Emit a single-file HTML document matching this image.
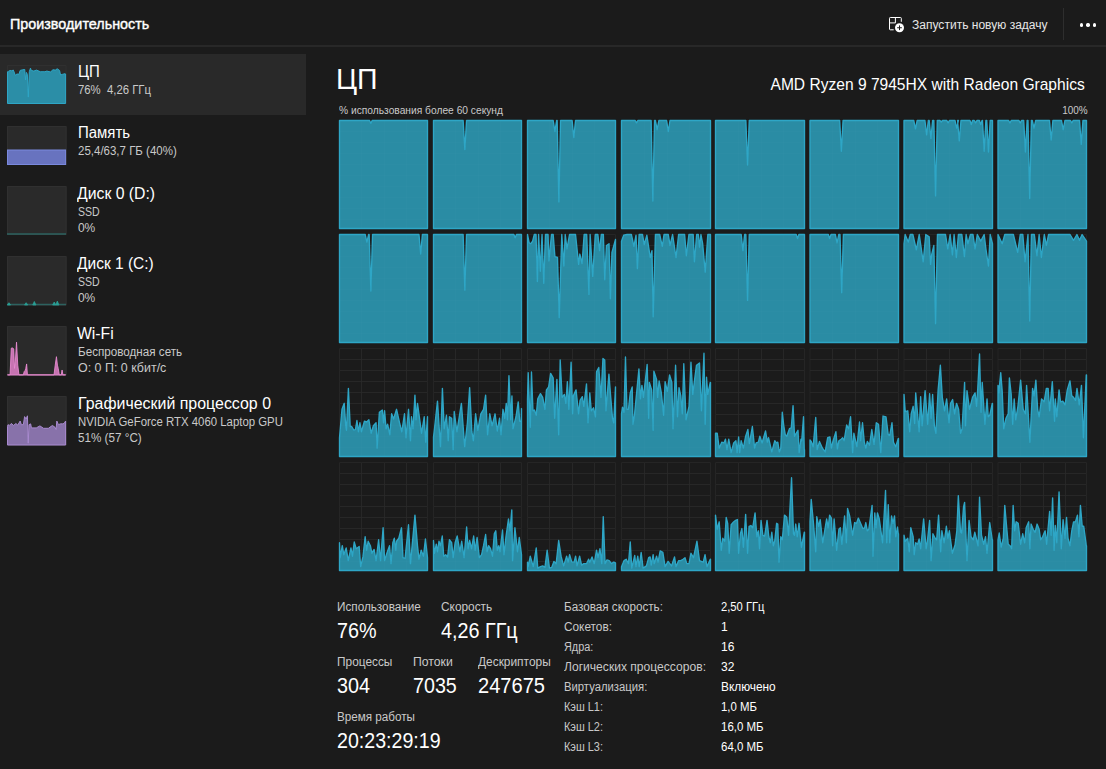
<!DOCTYPE html>
<html><head><meta charset="utf-8"><style>
html,body{margin:0;padding:0;}
body{width:1106px;height:769px;overflow:hidden;background:#1b1b1b;position:relative;font-family:"Liberation Sans", sans-serif;}
.abs{position:absolute;}
.t{position:absolute;white-space:nowrap;}
</style></head><body>
<div class="abs" style="left:0;top:45px;width:1106px;height:2px;background:#282828"></div>
<div class="abs" style="left:1063px;top:8px;width:1px;height:32px;background:#2e2e2e"></div>
<div class="abs" style="left:1080px;top:23.2px;width:3.4px;height:3.4px;border-radius:50%;background:#fff"></div>
<div class="abs" style="left:1086.2px;top:23.2px;width:3.4px;height:3.4px;border-radius:50%;background:#fff"></div>
<div class="abs" style="left:1092.6px;top:23.2px;width:3.4px;height:3.4px;border-radius:50%;background:#fff"></div>
<div class="abs" style="left:0;top:54px;width:306px;height:60.7px;background:#292929"></div>
<svg class="abs" width="24" height="24" viewBox="0 0 24 24" style="left:884px;top:12px">
<path d="M9.7 17.8H6.3a0.8 0.8 0 0 1-0.8-0.8V6.3a0.8 0.8 0 0 1 0.8-0.8H16.5a0.8 0.8 0 0 1 0.8 0.8V9.8" fill="none" stroke="#fff" stroke-width="1"/>
<path d="M5.5 10.9H11.4V5.5" fill="none" stroke="#fff" stroke-width="1"/>
<circle cx="15.5" cy="15.75" r="4.5" fill="#fff"/>
<path d="M15.5 13.4V18.1M13.15 15.75H17.85" stroke="#1c1c1c" stroke-width="1"/>
</svg>
<svg class="abs" width="80" height="460" viewBox="0 0 80 460" style="left:0;top:0"><rect x="7" y="65" width="59.6" height="39" fill="#2a2a2a"/><path d="M7.5 65.5H66.1V103.5H7.5Z" fill="none" stroke="#303030" stroke-width="1"/><path d="M7.5 103.5L7.50 71.85L7.50 71.72L8.46 71.39L10.09 70.42L11.72 70.74L13.35 70.09L15.30 75.30L16.93 74.00L18.88 74.32L20.18 70.42L22.78 69.76L24.74 69.44L25.52 79.86L26.37 72.37L27.34 74.32L28.32 97.11L29.29 71.72L30.47 68.14L31.25 70.42L33.85 71.07L36.46 70.09L40.36 71.72L44.92 71.72L46.87 71.07L50.78 72.04L52.73 69.76L55.33 70.09L57.16 68.79L59.57 70.42L60.54 74.97L62.50 74.32L65.10 73.67L65.60 74.00L65.6 103.5Z" fill="#2b8ea7" stroke="#2ea6c6" stroke-width="1"/><rect x="7" y="126" width="59.6" height="39" fill="#2a2a2a"/><path d="M7.5 126.5H66.1V164.5H7.5Z" fill="none" stroke="#303030" stroke-width="1"/><rect x="7.5" y="150" width="58.1" height="14.5" fill="#6873bf" stroke="#7a89de" stroke-width="1"/><rect x="7" y="186" width="59.6" height="49" fill="#2a2a2a"/><path d="M7.5 186.5H66.1V234.5H7.5Z" fill="none" stroke="#303030" stroke-width="1"/><path d="M7 234H66" stroke="#2d625f" stroke-width="1.4"/><rect x="7" y="256" width="59.6" height="49.5" fill="#2a2a2a"/><path d="M7.5 256.5H66.1V305.0H7.5Z" fill="none" stroke="#303030" stroke-width="1"/><path d="M7 304.5H66" stroke="#2d625f" stroke-width="1.4"/><path d="M7.37 305.0L8.97 302.7L10.57 305.0ZM24.53 305.0L26.13 302.7L27.73 305.0ZM32.72 305.0L34.32 301.5L35.92 305.0ZM52.61 305.0L54.21 302.0L55.81 305.0ZM55.73 305.0L57.33 301.1L58.93 305.0Z" stroke="#2aa095" stroke-width="0.8" fill="#2aa095"/><rect x="7" y="326" width="59.6" height="49.5" fill="#2a2a2a"/><path d="M7.5 326.5H66.1V375.0H7.5Z" fill="none" stroke="#303030" stroke-width="1"/><path d="M7.5 375.0L7.50 374.83L10.08 374.83L11.29 348.22L12.50 347.82L13.71 349.03L14.51 368.38L15.32 361.93L16.53 342.17L17.74 365.15L18.95 374.83L23.38 374.83L24.19 371.60L25.16 370.39L25.80 368.38L26.61 363.94L27.41 374.83L54.02 374.83L55.23 365.15L56.44 356.69L57.41 365.15L58.21 368.38L59.26 374.83L61.28 374.83L62.08 369.99L62.89 374.83L65.60 374.83L65.6 375.0Z" fill="#d77bc0" fill-opacity="0.9" stroke="#e88ad0" stroke-width="0.9"/><rect x="7" y="396" width="59.6" height="49.5" fill="#2a2a2a"/><path d="M7.5 396.5H66.1V445.0H7.5Z" fill="none" stroke="#303030" stroke-width="1"/><path d="M7.5 445.0L7.50 426.28L7.50 426.28L8.06 424.67L9.27 425.48L11.29 423.46L13.71 425.48L15.72 423.46L17.74 425.07L20.16 421.04L21.37 424.67L23.38 424.67L24.59 416.61L26.20 419.03L27.41 415.80L28.22 443.21L29.03 424.67L30.64 423.86L31.44 427.89L36.28 427.89L39.91 425.88L43.54 428.30L48.38 428.30L52.41 425.48L54.83 427.09L56.04 429.51L56.84 421.04L58.45 424.67L60.47 423.86L62.49 423.86L64.10 423.46L65.60 421.04L65.60 421.04L65.6 445.0Z" fill="#8872aa" stroke="#a98ad0" stroke-width="1"/></svg>
<svg class="abs" width="1106" height="769" viewBox="0 0 1106 769" style="left:0;top:0"><path d="M339.50 120.50H427.50V228.50H339.50ZM361.50 120.50V228.50M384.50 120.50V228.50M406.50 120.50V228.50M339.50 131.50H427.50M339.50 142.50H427.50M339.50 153.50H427.50M339.50 164.50H427.50M339.50 175.50H427.50M339.50 186.50H427.50M339.50 197.50H427.50M339.50 208.50H427.50M339.50 219.50H427.50" fill="none" stroke="#252525" stroke-width="1"/><path d="M339.50 228.50L339.50 120.50L369.57 120.50L370.87 123.22L372.17 120.50L427.50 120.50L427.50 228.50Z" fill="#2a8ca4" stroke="#2ea6c6" stroke-width="1.35" stroke-linejoin="round"/><path d="M361.50 120.50V228.50M384.50 120.50V228.50M406.50 120.50V228.50M339.50 131.50H427.50M339.50 142.50H427.50M339.50 153.50H427.50M339.50 164.50H427.50M339.50 175.50H427.50M339.50 186.50H427.50M339.50 197.50H427.50M339.50 208.50H427.50M339.50 219.50H427.50" fill="none" stroke="#ffffff" stroke-opacity="0.012" stroke-width="1"/><path d="M433.50 120.50H521.50V228.50H433.50ZM455.50 120.50V228.50M478.50 120.50V228.50M500.50 120.50V228.50M433.50 131.50H521.50M433.50 142.50H521.50M433.50 153.50H521.50M433.50 164.50H521.50M433.50 175.50H521.50M433.50 186.50H521.50M433.50 197.50H521.50M433.50 208.50H521.50M433.50 219.50H521.50" fill="none" stroke="#252525" stroke-width="1"/><path d="M433.50 228.50L433.50 120.50L463.14 120.50L464.84 149.50L466.54 120.50L521.50 120.50L521.50 228.50Z" fill="#2a8ca4" stroke="#2ea6c6" stroke-width="1.35" stroke-linejoin="round"/><path d="M455.50 120.50V228.50M478.50 120.50V228.50M500.50 120.50V228.50M433.50 131.50H521.50M433.50 142.50H521.50M433.50 153.50H521.50M433.50 164.50H521.50M433.50 175.50H521.50M433.50 186.50H521.50M433.50 197.50H521.50M433.50 208.50H521.50M433.50 219.50H521.50" fill="none" stroke="#ffffff" stroke-opacity="0.012" stroke-width="1"/><path d="M527.50 120.50H615.50V228.50H527.50ZM549.50 120.50V228.50M572.50 120.50V228.50M594.50 120.50V228.50M527.50 131.50H615.50M527.50 142.50H615.50M527.50 153.50H615.50M527.50 164.50H615.50M527.50 175.50H615.50M527.50 186.50H615.50M527.50 197.50H615.50M527.50 208.50H615.50M527.50 219.50H615.50" fill="none" stroke="#252525" stroke-width="1"/><path d="M527.50 228.50L527.50 120.50L553.22 120.50L554.92 131.46L556.62 120.50L557.17 120.50L558.87 201.90L560.57 120.50L572.12 120.50L573.82 137.47L575.52 120.50L615.50 120.50L615.50 228.50Z" fill="#2a8ca4" stroke="#2ea6c6" stroke-width="1.35" stroke-linejoin="round"/><path d="M549.50 120.50V228.50M572.50 120.50V228.50M594.50 120.50V228.50M527.50 131.50H615.50M527.50 142.50H615.50M527.50 153.50H615.50M527.50 164.50H615.50M527.50 175.50H615.50M527.50 186.50H615.50M527.50 197.50H615.50M527.50 208.50H615.50M527.50 219.50H615.50" fill="none" stroke="#ffffff" stroke-opacity="0.012" stroke-width="1"/><path d="M621.50 120.50H710.50V228.50H621.50ZM644.50 120.50V228.50M667.50 120.50V228.50M689.50 120.50V228.50M621.50 131.50H710.50M621.50 142.50H710.50M621.50 153.50H710.50M621.50 164.50H710.50M621.50 175.50H710.50M621.50 186.50H710.50M621.50 197.50H710.50M621.50 208.50H710.50M621.50 219.50H710.50" fill="none" stroke="#252525" stroke-width="1"/><path d="M621.50 228.50L621.50 120.50L635.22 120.50L636.52 122.87L637.82 120.50L651.14 120.50L652.84 201.04L654.54 120.50L655.44 120.50L657.14 129.74L658.84 120.50L666.60 120.50L668.30 131.46L670.00 120.50L710.50 120.50L710.50 228.50Z" fill="#2a8ca4" stroke="#2ea6c6" stroke-width="1.35" stroke-linejoin="round"/><path d="M644.50 120.50V228.50M667.50 120.50V228.50M689.50 120.50V228.50M621.50 131.50H710.50M621.50 142.50H710.50M621.50 153.50H710.50M621.50 164.50H710.50M621.50 175.50H710.50M621.50 186.50H710.50M621.50 197.50H710.50M621.50 208.50H710.50M621.50 219.50H710.50" fill="none" stroke="#ffffff" stroke-opacity="0.012" stroke-width="1"/><path d="M715.50 120.50H804.50V228.50H715.50ZM738.50 120.50V228.50M761.50 120.50V228.50M783.50 120.50V228.50M715.50 131.50H804.50M715.50 142.50H804.50M715.50 153.50H804.50M715.50 164.50H804.50M715.50 175.50H804.50M715.50 186.50H804.50M715.50 197.50H804.50M715.50 208.50H804.50M715.50 219.50H804.50" fill="none" stroke="#252525" stroke-width="1"/><path d="M715.50 228.50L715.50 120.50L745.86 120.50L747.56 164.96L749.26 120.50L804.50 120.50L804.50 228.50Z" fill="#2a8ca4" stroke="#2ea6c6" stroke-width="1.35" stroke-linejoin="round"/><path d="M738.50 120.50V228.50M761.50 120.50V228.50M783.50 120.50V228.50M715.50 131.50H804.50M715.50 142.50H804.50M715.50 153.50H804.50M715.50 164.50H804.50M715.50 175.50H804.50M715.50 186.50H804.50M715.50 197.50H804.50M715.50 208.50H804.50M715.50 219.50H804.50" fill="none" stroke="#ffffff" stroke-opacity="0.012" stroke-width="1"/><path d="M810.00 120.50H898.50V228.50H810.00ZM832.50 120.50V228.50M855.50 120.50V228.50M877.50 120.50V228.50M810.00 131.50H898.50M810.00 142.50H898.50M810.00 153.50H898.50M810.00 164.50H898.50M810.00 175.50H898.50M810.00 186.50H898.50M810.00 197.50H898.50M810.00 208.50H898.50M810.00 219.50H898.50" fill="none" stroke="#252525" stroke-width="1"/><path d="M810.00 228.50L810.00 120.50L839.66 120.50L841.36 151.22L843.06 120.50L898.50 120.50L898.50 228.50Z" fill="#2a8ca4" stroke="#2ea6c6" stroke-width="1.35" stroke-linejoin="round"/><path d="M832.50 120.50V228.50M855.50 120.50V228.50M877.50 120.50V228.50M810.00 131.50H898.50M810.00 142.50H898.50M810.00 153.50H898.50M810.00 164.50H898.50M810.00 175.50H898.50M810.00 186.50H898.50M810.00 197.50H898.50M810.00 208.50H898.50M810.00 219.50H898.50" fill="none" stroke="#ffffff" stroke-opacity="0.012" stroke-width="1"/><path d="M904.00 120.50H992.50V228.50H904.00ZM926.50 120.50V228.50M949.50 120.50V228.50M971.50 120.50V228.50M904.00 131.50H992.50M904.00 142.50H992.50M904.00 153.50H992.50M904.00 164.50H992.50M904.00 175.50H992.50M904.00 186.50H992.50M904.00 197.50H992.50M904.00 208.50H992.50M904.00 219.50H992.50" fill="none" stroke="#252525" stroke-width="1"/><path d="M904.00 228.50L904.00 120.50L913.76 120.50L915.46 128.88L917.16 120.50L924.93 120.50L926.63 134.90L928.33 120.50L929.22 120.50L930.92 138.33L932.62 120.50L933.86 120.50L935.56 195.88L937.26 120.50L939.93 120.50L941.23 122.01L942.53 120.50L946.80 120.50L948.10 122.87L949.40 120.50L954.99 120.50L956.69 128.03L958.39 120.50L957.57 120.50L959.27 140.91L960.97 120.50L969.99 120.50L971.29 124.59L972.59 120.50L974.29 120.50L975.59 122.87L976.89 120.50L979.44 120.50L980.74 124.59L982.04 120.50L982.48 120.50L984.18 151.22L985.88 120.50L986.77 120.50L988.47 152.08L990.17 120.50L992.50 120.50L992.50 228.50Z" fill="#2a8ca4" stroke="#2ea6c6" stroke-width="1.35" stroke-linejoin="round"/><path d="M926.50 120.50V228.50M949.50 120.50V228.50M971.50 120.50V228.50M904.00 131.50H992.50M904.00 142.50H992.50M904.00 153.50H992.50M904.00 164.50H992.50M904.00 175.50H992.50M904.00 186.50H992.50M904.00 197.50H992.50M904.00 208.50H992.50M904.00 219.50H992.50" fill="none" stroke="#ffffff" stroke-opacity="0.012" stroke-width="1"/><path d="M998.00 120.50H1086.50V228.50H998.00ZM1020.50 120.50V228.50M1043.50 120.50V228.50M1065.50 120.50V228.50M998.00 131.50H1086.50M998.00 142.50H1086.50M998.00 153.50H1086.50M998.00 164.50H1086.50M998.00 175.50H1086.50M998.00 186.50H1086.50M998.00 197.50H1086.50M998.00 208.50H1086.50M998.00 219.50H1086.50" fill="none" stroke="#252525" stroke-width="1"/><path d="M998.00 228.50L998.00 120.50L1008.65 120.50L1009.95 122.87L1011.25 120.50L1018.95 120.50L1020.25 122.87L1021.55 120.50L1023.71 120.50L1025.41 152.08L1027.11 120.50L1028.00 120.50L1029.70 198.46L1031.40 120.50L1032.30 120.50L1034.00 128.03L1035.70 120.50L1049.48 120.50L1051.18 140.05L1052.88 120.50L1061.50 120.50L1063.20 129.74L1064.90 120.50L1070.49 120.50L1071.79 122.87L1073.09 120.50L1079.54 120.50L1081.24 144.35L1082.94 120.50L1086.50 120.50L1086.50 228.50Z" fill="#2a8ca4" stroke="#2ea6c6" stroke-width="1.35" stroke-linejoin="round"/><path d="M1020.50 120.50V228.50M1043.50 120.50V228.50M1065.50 120.50V228.50M998.00 131.50H1086.50M998.00 142.50H1086.50M998.00 153.50H1086.50M998.00 164.50H1086.50M998.00 175.50H1086.50M998.00 186.50H1086.50M998.00 197.50H1086.50M998.00 208.50H1086.50M998.00 219.50H1086.50" fill="none" stroke="#ffffff" stroke-opacity="0.012" stroke-width="1"/><path d="M339.50 234.50H427.50V342.50H339.50ZM361.50 234.50V342.50M384.50 234.50V342.50M406.50 234.50V342.50M339.50 245.50H427.50M339.50 256.50H427.50M339.50 267.50H427.50M339.50 278.50H427.50M339.50 289.50H427.50M339.50 300.50H427.50M339.50 311.50H427.50M339.50 322.50H427.50M339.50 333.50H427.50" fill="none" stroke="#252525" stroke-width="1"/><path d="M339.50 342.50L339.50 234.50L365.22 234.50L366.92 242.03L368.62 234.50L369.17 234.50L370.87 290.99L372.57 234.50L418.99 234.50L420.69 254.05L422.39 234.50L427.50 234.50L427.50 342.50Z" fill="#2a8ca4" stroke="#2ea6c6" stroke-width="1.35" stroke-linejoin="round"/><path d="M361.50 234.50V342.50M384.50 234.50V342.50M406.50 234.50V342.50M339.50 245.50H427.50M339.50 256.50H427.50M339.50 267.50H427.50M339.50 278.50H427.50M339.50 289.50H427.50M339.50 300.50H427.50M339.50 311.50H427.50M339.50 322.50H427.50M339.50 333.50H427.50" fill="none" stroke="#ffffff" stroke-opacity="0.012" stroke-width="1"/><path d="M433.50 234.50H521.50V342.50H433.50ZM455.50 234.50V342.50M478.50 234.50V342.50M500.50 234.50V342.50M433.50 245.50H521.50M433.50 256.50H521.50M433.50 267.50H521.50M433.50 278.50H521.50M433.50 289.50H521.50M433.50 300.50H521.50M433.50 311.50H521.50M433.50 322.50H521.50M433.50 333.50H521.50" fill="none" stroke="#252525" stroke-width="1"/><path d="M433.50 342.50L433.50 234.50L463.14 234.50L464.84 290.13L466.54 234.50L513.88 234.50L515.18 237.73L516.48 234.50L521.50 234.50L521.50 342.50Z" fill="#2a8ca4" stroke="#2ea6c6" stroke-width="1.35" stroke-linejoin="round"/><path d="M455.50 234.50V342.50M478.50 234.50V342.50M500.50 234.50V342.50M433.50 245.50H521.50M433.50 256.50H521.50M433.50 267.50H521.50M433.50 278.50H521.50M433.50 289.50H521.50M433.50 300.50H521.50M433.50 311.50H521.50M433.50 322.50H521.50M433.50 333.50H521.50" fill="none" stroke="#ffffff" stroke-opacity="0.012" stroke-width="1"/><path d="M527.50 234.50H615.50V342.50H527.50ZM549.50 234.50V342.50M572.50 234.50V342.50M594.50 234.50V342.50M527.50 245.50H615.50M527.50 256.50H615.50M527.50 267.50H615.50M527.50 278.50H615.50M527.50 289.50H615.50M527.50 300.50H615.50M527.50 311.50H615.50M527.50 322.50H615.50M527.50 333.50H615.50" fill="none" stroke="#252525" stroke-width="1"/><path d="M527.50 342.50L527.50 234.50L529.15 242.88L530.87 243.74L532.59 241.17L534.31 234.50L536.03 234.50L537.40 281.54L538.60 234.50L540.32 271.23L542.04 234.50L543.76 283.25L545.47 234.50L548.05 234.50L548.91 260.92L551.49 234.50L553.20 234.50L554.92 256.63L557.50 257.49L559.22 317.61L561.79 234.50L563.86 266.08L565.23 234.50L566.95 248.90L569.52 234.50L575.54 234.50L578.63 264.36L579.83 254.05L582.07 263.50L584.13 234.50L586.70 234.50L588.94 294.42L590.14 234.50L592.72 276.38L595.29 234.50L597.87 234.50L599.59 250.61L601.31 234.50L603.37 234.50L604.74 279.82L606.46 245.46L609.04 243.74L610.41 298.72L611.96 252.33L615.50 239.45L615.50 342.50Z" fill="#2a8ca4" stroke="#2ea6c6" stroke-width="1.35" stroke-linejoin="round"/><path d="M549.50 234.50V342.50M572.50 234.50V342.50M594.50 234.50V342.50M527.50 245.50H615.50M527.50 256.50H615.50M527.50 267.50H615.50M527.50 278.50H615.50M527.50 289.50H615.50M527.50 300.50H615.50M527.50 311.50H615.50M527.50 322.50H615.50M527.50 333.50H615.50" fill="none" stroke="#ffffff" stroke-opacity="0.012" stroke-width="1"/><path d="M621.50 234.50H710.50V342.50H621.50ZM644.50 234.50V342.50M667.50 234.50V342.50M689.50 234.50V342.50M621.50 245.50H710.50M621.50 256.50H710.50M621.50 267.50H710.50M621.50 278.50H710.50M621.50 289.50H710.50M621.50 300.50H710.50M621.50 311.50H710.50M621.50 322.50H710.50M621.50 333.50H710.50" fill="none" stroke="#252525" stroke-width="1"/><path d="M621.50 342.50L621.50 241.17L623.64 235.15L627.07 234.50L631.37 234.50L633.95 246.32L636.01 235.15L637.38 268.65L639.10 234.50L642.54 234.50L644.25 244.60L646.83 235.15L650.27 257.49L651.98 250.61L653.19 316.75L655.42 234.50L659.71 234.50L662.29 246.32L664.01 234.50L668.30 234.50L670.02 245.46L672.60 234.50L676.03 257.49L678.61 234.50L684.62 234.50L686.34 255.77L688.92 234.50L693.21 234.50L694.42 261.78L696.65 234.50L698.37 234.50L699.57 247.18L700.94 234.50L702.66 243.74L705.24 272.09L707.82 234.50L710.39 234.50L710.50 234.50L710.50 342.50Z" fill="#2a8ca4" stroke="#2ea6c6" stroke-width="1.35" stroke-linejoin="round"/><path d="M644.50 234.50V342.50M667.50 234.50V342.50M689.50 234.50V342.50M621.50 245.50H710.50M621.50 256.50H710.50M621.50 267.50H710.50M621.50 278.50H710.50M621.50 289.50H710.50M621.50 300.50H710.50M621.50 311.50H710.50M621.50 322.50H710.50M621.50 333.50H710.50" fill="none" stroke="#ffffff" stroke-opacity="0.012" stroke-width="1"/><path d="M715.50 234.50H804.50V342.50H715.50ZM738.50 234.50V342.50M761.50 234.50V342.50M783.50 234.50V342.50M715.50 245.50H804.50M715.50 256.50H804.50M715.50 267.50H804.50M715.50 278.50H804.50M715.50 289.50H804.50M715.50 300.50H804.50M715.50 311.50H804.50M715.50 322.50H804.50M715.50 333.50H804.50" fill="none" stroke="#252525" stroke-width="1"/><path d="M715.50 342.50L715.50 234.50L741.22 234.50L742.92 250.61L744.62 234.50L745.86 234.50L747.56 300.43L749.26 234.50L796.25 234.50L797.55 238.59L798.85 234.50L804.50 234.50L804.50 342.50Z" fill="#2a8ca4" stroke="#2ea6c6" stroke-width="1.35" stroke-linejoin="round"/><path d="M738.50 234.50V342.50M761.50 234.50V342.50M783.50 234.50V342.50M715.50 245.50H804.50M715.50 256.50H804.50M715.50 267.50H804.50M715.50 278.50H804.50M715.50 289.50H804.50M715.50 300.50H804.50M715.50 311.50H804.50M715.50 322.50H804.50M715.50 333.50H804.50" fill="none" stroke="#ffffff" stroke-opacity="0.012" stroke-width="1"/><path d="M810.00 234.50H898.50V342.50H810.00ZM832.50 234.50V342.50M855.50 234.50V342.50M877.50 234.50V342.50M810.00 245.50H898.50M810.00 256.50H898.50M810.00 267.50H898.50M810.00 278.50H898.50M810.00 289.50H898.50M810.00 300.50H898.50M810.00 311.50H898.50M810.00 322.50H898.50M810.00 333.50H898.50" fill="none" stroke="#252525" stroke-width="1"/><path d="M810.00 342.50L810.00 234.50L828.38 234.50L829.68 238.59L830.98 234.50L835.36 234.50L837.06 242.88L838.76 234.50L840.00 234.50L841.70 292.70L843.40 234.50L898.50 234.50L898.50 342.50Z" fill="#2a8ca4" stroke="#2ea6c6" stroke-width="1.35" stroke-linejoin="round"/><path d="M832.50 234.50V342.50M855.50 234.50V342.50M877.50 234.50V342.50M810.00 245.50H898.50M810.00 256.50H898.50M810.00 267.50H898.50M810.00 278.50H898.50M810.00 289.50H898.50M810.00 300.50H898.50M810.00 311.50H898.50M810.00 322.50H898.50M810.00 333.50H898.50" fill="none" stroke="#ffffff" stroke-opacity="0.012" stroke-width="1"/><path d="M904.00 234.50H992.50V342.50H904.00ZM926.50 234.50V342.50M949.50 234.50V342.50M971.50 234.50V342.50M904.00 245.50H992.50M904.00 256.50H992.50M904.00 267.50H992.50M904.00 278.50H992.50M904.00 289.50H992.50M904.00 300.50H992.50M904.00 311.50H992.50M904.00 322.50H992.50M904.00 333.50H992.50" fill="none" stroke="#252525" stroke-width="1"/><path d="M904.00 342.50L904.00 243.74L905.15 234.50L908.25 242.03L910.31 234.50L912.88 234.50L916.32 249.76L919.24 234.50L923.19 261.78L925.77 234.50L929.20 236.87L930.58 264.36L931.78 254.05L933.84 245.46L935.56 323.63L937.45 234.50L945.52 234.50L947.76 248.90L950.16 234.50L952.40 254.91L954.11 234.50L956.35 257.49L958.41 234.50L961.84 234.50L964.42 256.63L966.14 234.50L967.86 243.74L970.43 234.50L973.01 234.50L975.07 248.90L977.31 234.50L980.74 241.17L984.18 234.50L985.90 248.90L988.47 266.08L990.19 234.50L992.50 243.74L992.50 342.50Z" fill="#2a8ca4" stroke="#2ea6c6" stroke-width="1.35" stroke-linejoin="round"/><path d="M926.50 234.50V342.50M949.50 234.50V342.50M971.50 234.50V342.50M904.00 245.50H992.50M904.00 256.50H992.50M904.00 267.50H992.50M904.00 278.50H992.50M904.00 289.50H992.50M904.00 300.50H992.50M904.00 311.50H992.50M904.00 322.50H992.50M904.00 333.50H992.50" fill="none" stroke="#ffffff" stroke-opacity="0.012" stroke-width="1"/><path d="M998.00 234.50H1086.50V342.50H998.00ZM1020.50 234.50V342.50M1043.50 234.50V342.50M1065.50 234.50V342.50M998.00 245.50H1086.50M998.00 256.50H1086.50M998.00 267.50H1086.50M998.00 278.50H1086.50M998.00 289.50H1086.50M998.00 300.50H1086.50M998.00 311.50H1086.50M998.00 322.50H1086.50M998.00 333.50H1086.50" fill="none" stroke="#252525" stroke-width="1"/><path d="M998.00 342.50L998.00 234.50L1002.22 243.74L1004.79 234.50L1013.38 234.50L1017.68 252.33L1020.25 234.50L1022.83 234.50L1025.06 261.78L1027.98 234.50L1029.70 321.05L1031.42 234.50L1034.34 234.50L1036.92 255.77L1039.15 234.50L1041.38 257.49L1044.30 234.50L1046.37 245.46L1048.60 234.50L1070.07 234.50L1073.51 240.31L1076.94 234.50L1079.52 240.31L1082.10 234.50L1086.50 241.17L1086.50 342.50Z" fill="#2a8ca4" stroke="#2ea6c6" stroke-width="1.35" stroke-linejoin="round"/><path d="M1020.50 234.50V342.50M1043.50 234.50V342.50M1065.50 234.50V342.50M998.00 245.50H1086.50M998.00 256.50H1086.50M998.00 267.50H1086.50M998.00 278.50H1086.50M998.00 289.50H1086.50M998.00 300.50H1086.50M998.00 311.50H1086.50M998.00 322.50H1086.50M998.00 333.50H1086.50" fill="none" stroke="#ffffff" stroke-opacity="0.012" stroke-width="1"/><path d="M339.50 348.50H427.50V456.50H339.50ZM361.50 348.50V456.50M384.50 348.50V456.50M406.50 348.50V456.50M339.50 359.50H427.50M339.50 370.50H427.50M339.50 381.50H427.50M339.50 392.50H427.50M339.50 403.50H427.50M339.50 414.50H427.50M339.50 425.50H427.50M339.50 436.50H427.50M339.50 447.50H427.50" fill="none" stroke="#252525" stroke-width="1"/><path d="M339.50 456.50L339.50 437.71L341.98 409.30L344.22 403.32L345.72 425.75L346.47 430.23L348.41 388.36L350.21 426.50L351.70 426.50L353.94 430.23L355.44 429.49L356.93 420.51L358.43 431.73L359.93 422.76L361.42 431.73L364.41 421.26L366.65 422.01L368.90 419.77L371.14 433.22L373.38 425.75L376.07 422.76L377.12 448.18L379.36 412.29L382.36 410.05L383.55 422.76L384.60 410.79L386.09 428.74L387.59 424.25L389.83 434.72L391.63 413.79L393.57 419.02L396.56 409.30L399.55 422.76L401.79 431.73L404.49 413.79L405.98 437.71L408.52 409.30L410.47 440.70L411.51 416.78L413.01 428.74L414.95 395.09L416.00 419.77L417.50 403.32L419.74 419.77L421.53 433.22L424.22 416.78L425.72 442.20L427.50 416.78L427.50 456.50Z" fill="#2a8ca4" stroke="#2ea6c6" stroke-width="1.35" stroke-linejoin="round"/><path d="M361.50 348.50V456.50M384.50 348.50V456.50M406.50 348.50V456.50M339.50 359.50H427.50M339.50 370.50H427.50M339.50 381.50H427.50M339.50 392.50H427.50M339.50 403.50H427.50M339.50 414.50H427.50M339.50 425.50H427.50M339.50 436.50H427.50M339.50 447.50H427.50" fill="none" stroke="#ffffff" stroke-opacity="0.012" stroke-width="1"/><path d="M433.50 348.50H521.50V456.50H433.50ZM455.50 348.50V456.50M478.50 348.50V456.50M500.50 348.50V456.50M433.50 359.50H521.50M433.50 370.50H521.50M433.50 381.50H521.50M433.50 392.50H521.50M433.50 403.50H521.50M433.50 414.50H521.50M433.50 425.50H521.50M433.50 436.50H521.50M433.50 447.50H521.50" fill="none" stroke="#252525" stroke-width="1"/><path d="M433.50 456.50L433.50 436.96L434.49 428.74L437.48 401.07L439.27 428.74L440.47 446.68L442.41 388.36L444.21 428.74L446.45 415.28L448.24 440.70L449.44 416.78L451.68 418.27L453.18 449.67L454.22 411.54L456.92 431.73L461.40 403.32L464.69 446.68L467.38 422.76L469.63 387.62L471.87 431.73L473.36 440.70L475.61 413.79L477.85 430.23L480.84 413.79L483.53 409.30L485.63 395.09L487.57 434.72L489.81 413.79L492.06 425.75L495.05 413.79L497.29 430.98L499.53 418.27L501.03 434.72L502.97 409.30L504.77 418.27L506.26 403.32L507.46 419.77L508.95 375.65L510.75 419.77L511.94 395.84L512.99 428.74L515.98 416.78L518.22 401.82L519.72 421.26L521.21 421.26L521.50 408.55L521.50 456.50Z" fill="#2a8ca4" stroke="#2ea6c6" stroke-width="1.35" stroke-linejoin="round"/><path d="M455.50 348.50V456.50M478.50 348.50V456.50M500.50 348.50V456.50M433.50 359.50H521.50M433.50 370.50H521.50M433.50 381.50H521.50M433.50 392.50H521.50M433.50 403.50H521.50M433.50 414.50H521.50M433.50 425.50H521.50M433.50 436.50H521.50M433.50 447.50H521.50" fill="none" stroke="#ffffff" stroke-opacity="0.012" stroke-width="1"/><path d="M527.50 348.50H615.50V456.50H527.50ZM549.50 348.50V456.50M572.50 348.50V456.50M594.50 348.50V456.50M527.50 359.50H615.50M527.50 370.50H615.50M527.50 381.50H615.50M527.50 392.50H615.50M527.50 403.50H615.50M527.50 414.50H615.50M527.50 425.50H615.50M527.50 436.50H615.50M527.50 447.50H615.50" fill="none" stroke="#252525" stroke-width="1"/><path d="M527.50 456.50L527.50 398.83L528.19 372.66L530.28 427.24L531.48 371.92L532.97 410.79L534.47 410.05L536.26 415.28L537.76 398.83L540.45 393.60L542.69 397.34L544.93 409.30L546.43 389.86L548.67 386.87L550.62 373.41L553.16 377.90L554.65 418.27L556.90 379.39L558.69 434.72L560.19 359.95L562.13 397.34L564.37 394.35L565.87 403.32L567.36 381.64L568.86 409.30L571.10 362.20L572.60 413.79L573.35 395.84L576.04 389.86L578.58 413.79L580.07 400.33L582.32 396.59L583.81 406.31L586.50 383.88L588.00 422.76L589.79 392.85L591.29 410.79L593.53 407.80L595.48 416.78L596.52 371.92L598.77 367.43L601.01 397.34L602.95 358.46L604.75 359.95L605.94 410.79L608.93 374.16L610.73 397.34L612.52 418.27L613.72 422.76L615.50 386.87L615.50 456.50Z" fill="#2a8ca4" stroke="#2ea6c6" stroke-width="1.35" stroke-linejoin="round"/><path d="M549.50 348.50V456.50M572.50 348.50V456.50M594.50 348.50V456.50M527.50 359.50H615.50M527.50 370.50H615.50M527.50 381.50H615.50M527.50 392.50H615.50M527.50 403.50H615.50M527.50 414.50H615.50M527.50 425.50H615.50M527.50 436.50H615.50M527.50 447.50H615.50" fill="none" stroke="#ffffff" stroke-opacity="0.012" stroke-width="1"/><path d="M621.50 348.50H710.50V456.50H621.50ZM644.50 348.50V456.50M667.50 348.50V456.50M689.50 348.50V456.50M621.50 359.50H710.50M621.50 370.50H710.50M621.50 381.50H710.50M621.50 392.50H710.50M621.50 403.50H710.50M621.50 414.50H710.50M621.50 425.50H710.50M621.50 436.50H710.50M621.50 447.50H710.50" fill="none" stroke="#252525" stroke-width="1"/><path d="M621.50 456.50L621.50 413.79L622.49 407.06L623.98 412.29L625.48 356.96L626.97 409.30L628.47 409.30L630.26 392.85L632.21 386.87L632.95 424.25L634.45 415.28L638.93 368.93L640.43 398.83L641.93 385.37L643.42 397.34L647.16 364.44L648.65 418.27L649.40 382.38L651.64 389.86L653.14 430.23L653.89 371.17L656.58 379.39L657.63 397.34L659.12 380.89L661.36 392.85L663.61 415.28L665.10 381.64L667.35 391.36L669.59 374.91L671.83 382.38L673.03 428.74L675.57 365.19L677.51 416.78L679.01 387.62L680.80 395.84L682.30 413.79L683.79 363.69L686.04 419.77L689.03 406.31L690.97 362.20L692.77 394.35L695.01 376.40L696.50 365.19L699.50 362.94L701.44 410.79L703.98 353.22L705.18 424.25L706.52 377.15L707.72 394.35L710.26 382.38L710.50 382.38L710.50 456.50Z" fill="#2a8ca4" stroke="#2ea6c6" stroke-width="1.35" stroke-linejoin="round"/><path d="M644.50 348.50V456.50M667.50 348.50V456.50M689.50 348.50V456.50M621.50 359.50H710.50M621.50 370.50H710.50M621.50 381.50H710.50M621.50 392.50H710.50M621.50 403.50H710.50M621.50 414.50H710.50M621.50 425.50H710.50M621.50 436.50H710.50M621.50 447.50H710.50" fill="none" stroke="#ffffff" stroke-opacity="0.012" stroke-width="1"/><path d="M715.50 348.50H804.50V456.50H715.50ZM738.50 348.50V456.50M761.50 348.50V456.50M783.50 348.50V456.50M715.50 359.50H804.50M715.50 370.50H804.50M715.50 381.50H804.50M715.50 392.50H804.50M715.50 403.50H804.50M715.50 414.50H804.50M715.50 425.50H804.50M715.50 436.50H804.50M715.50 447.50H804.50" fill="none" stroke="#252525" stroke-width="1"/><path d="M715.50 456.50L715.50 433.22L717.23 433.22L719.18 448.18L721.72 442.20L723.96 442.94L725.46 439.21L726.95 449.67L728.75 439.21L731.14 452.66L733.68 442.94L735.93 440.70L737.12 452.66L738.62 436.96L739.66 452.66L741.16 440.70L743.40 448.18L745.64 436.21L747.89 429.49L749.38 443.69L752.37 426.50L754.62 448.18L756.11 442.94L758.36 442.20L759.85 436.21L762.09 442.94L765.53 430.98L767.33 442.20L768.52 437.71L771.81 451.92L774.80 440.70L776.30 442.94L777.79 442.20L779.29 451.92L780.79 448.18L782.28 412.29L783.78 425.75L785.27 434.72L786.77 436.21L789.46 428.74L791.25 427.99L793.05 405.56L794.54 436.21L797.98 430.23L799.18 452.66L800.97 439.21L801.72 440.70L803.51 416.78L804.26 449.67L804.50 449.67L804.50 456.50Z" fill="#2a8ca4" stroke="#2ea6c6" stroke-width="1.35" stroke-linejoin="round"/><path d="M738.50 348.50V456.50M761.50 348.50V456.50M783.50 348.50V456.50M715.50 359.50H804.50M715.50 370.50H804.50M715.50 381.50H804.50M715.50 392.50H804.50M715.50 403.50H804.50M715.50 414.50H804.50M715.50 425.50H804.50M715.50 436.50H804.50M715.50 447.50H804.50" fill="none" stroke="#ffffff" stroke-opacity="0.012" stroke-width="1"/><path d="M810.00 348.50H898.50V456.50H810.00ZM832.50 348.50V456.50M855.50 348.50V456.50M877.50 348.50V456.50M810.00 359.50H898.50M810.00 370.50H898.50M810.00 381.50H898.50M810.00 392.50H898.50M810.00 403.50H898.50M810.00 414.50H898.50M810.00 425.50H898.50M810.00 436.50H898.50M810.00 447.50H898.50" fill="none" stroke="#252525" stroke-width="1"/><path d="M810.00 456.50L810.00 439.95L811.23 441.45L813.18 446.68L815.72 417.52L817.21 449.67L819.46 441.45L822.45 448.18L825.14 451.92L827.68 437.71L829.93 436.96L831.42 448.18L832.92 441.45L835.91 431.73L837.40 448.93L838.90 440.70L841.14 439.21L842.64 437.71L844.13 440.70L846.67 425.00L848.62 428.74L850.56 416.78L852.65 452.66L853.85 433.22L856.84 446.68L859.53 422.01L860.58 440.70L862.52 422.76L864.32 442.20L865.81 448.18L867.31 441.45L869.55 445.19L871.79 429.49L874.04 444.44L876.28 422.76L878.52 424.25L880.77 452.66L883.01 416.03L886.00 416.78L888.24 434.72L889.74 435.47L891.98 422.76L893.48 442.20L895.72 446.68L898.26 438.46L898.50 438.46L898.50 456.50Z" fill="#2a8ca4" stroke="#2ea6c6" stroke-width="1.35" stroke-linejoin="round"/><path d="M832.50 348.50V456.50M855.50 348.50V456.50M877.50 348.50V456.50M810.00 359.50H898.50M810.00 370.50H898.50M810.00 381.50H898.50M810.00 392.50H898.50M810.00 403.50H898.50M810.00 414.50H898.50M810.00 425.50H898.50M810.00 436.50H898.50M810.00 447.50H898.50" fill="none" stroke="#ffffff" stroke-opacity="0.012" stroke-width="1"/><path d="M904.00 348.50H992.50V456.50H904.00ZM926.50 348.50V456.50M949.50 348.50V456.50M971.50 348.50V456.50M904.00 359.50H992.50M904.00 370.50H992.50M904.00 381.50H992.50M904.00 392.50H992.50M904.00 403.50H992.50M904.00 414.50H992.50M904.00 425.50H992.50M904.00 436.50H992.50M904.00 447.50H992.50" fill="none" stroke="#252525" stroke-width="1"/><path d="M904.00 456.50L904.00 394.35L905.23 411.54L907.78 410.79L909.72 431.73L911.21 413.79L913.16 406.31L914.65 423.50L915.70 392.85L919.14 431.73L920.64 396.59L922.13 425.75L925.12 390.61L927.66 424.25L929.61 393.60L931.10 418.27L932.60 394.35L934.39 425.75L935.89 433.22L938.13 389.86L940.37 365.19L942.32 397.34L944.56 410.79L946.65 398.83L949.05 422.76L950.54 403.32L952.64 399.58L954.58 413.79L956.52 403.32L958.62 409.30L960.56 433.22L962.06 428.74L964.60 382.38L965.50 425.75L966.99 390.61L969.53 409.30L972.52 397.34L975.07 392.85L976.56 406.31L977.76 388.36L979.55 353.97L981.05 412.29L982.24 382.38L984.93 424.25L987.03 398.83L988.22 416.78L989.72 415.28L992.26 403.32L992.50 403.32L992.50 456.50Z" fill="#2a8ca4" stroke="#2ea6c6" stroke-width="1.35" stroke-linejoin="round"/><path d="M926.50 348.50V456.50M949.50 348.50V456.50M971.50 348.50V456.50M904.00 359.50H992.50M904.00 370.50H992.50M904.00 381.50H992.50M904.00 392.50H992.50M904.00 403.50H992.50M904.00 414.50H992.50M904.00 425.50H992.50M904.00 436.50H992.50M904.00 447.50H992.50" fill="none" stroke="#ffffff" stroke-opacity="0.012" stroke-width="1"/><path d="M998.00 348.50H1086.50V456.50H998.00ZM1020.50 348.50V456.50M1043.50 348.50V456.50M1065.50 348.50V456.50M998.00 359.50H1086.50M998.00 370.50H1086.50M998.00 381.50H1086.50M998.00 392.50H1086.50M998.00 403.50H1086.50M998.00 414.50H1086.50M998.00 425.50H1086.50M998.00 436.50H1086.50M998.00 447.50H1086.50" fill="none" stroke="#252525" stroke-width="1"/><path d="M998.00 456.50L998.00 385.37L998.79 392.85L1000.73 372.66L1002.22 391.36L1003.72 428.74L1005.96 418.27L1008.21 413.79L1009.40 377.90L1011.20 394.35L1012.69 424.25L1014.19 398.83L1015.68 419.77L1017.93 406.31L1020.62 380.14L1023.16 409.30L1025.40 413.79L1026.60 385.37L1029.89 442.20L1032.58 388.36L1034.07 395.84L1035.87 380.14L1037.66 409.30L1039.16 416.78L1041.55 398.83L1044.09 401.82L1046.34 388.36L1048.13 388.36L1049.63 410.79L1052.32 381.64L1054.56 421.26L1055.31 398.83L1056.80 416.78L1059.05 389.86L1060.54 401.82L1062.79 401.07L1065.03 404.81L1067.27 389.86L1069.96 380.89L1071.76 395.84L1073.55 397.34L1075.50 400.33L1076.99 388.36L1079.23 404.81L1081.48 385.37L1083.42 437.71L1086.26 374.91L1086.50 374.91L1086.50 456.50Z" fill="#2a8ca4" stroke="#2ea6c6" stroke-width="1.35" stroke-linejoin="round"/><path d="M1020.50 348.50V456.50M1043.50 348.50V456.50M1065.50 348.50V456.50M998.00 359.50H1086.50M998.00 370.50H1086.50M998.00 381.50H1086.50M998.00 392.50H1086.50M998.00 403.50H1086.50M998.00 414.50H1086.50M998.00 425.50H1086.50M998.00 436.50H1086.50M998.00 447.50H1086.50" fill="none" stroke="#ffffff" stroke-opacity="0.012" stroke-width="1"/><path d="M339.50 462.50H427.50V570.50H339.50ZM361.50 462.50V570.50M384.50 462.50V570.50M406.50 462.50V570.50M339.50 473.50H427.50M339.50 484.50H427.50M339.50 495.50H427.50M339.50 506.50H427.50M339.50 517.50H427.50M339.50 528.50H427.50M339.50 539.50H427.50M339.50 550.50H427.50M339.50 561.50H427.50" fill="none" stroke="#252525" stroke-width="1"/><path d="M339.50 570.50L339.50 542.74L340.19 557.69L342.28 545.73L343.78 554.70L346.17 547.97L348.26 560.68L350.95 547.97L352.45 556.20L354.24 541.99L356.19 548.72L359.18 546.48L360.67 566.66L362.92 556.94L365.16 536.76L366.65 550.21L368.15 541.24L370.39 545.73L371.89 553.21L374.13 549.47L376.07 560.68L378.62 539.75L380.56 560.68L383.10 527.79L384.60 560.68L386.84 553.21L389.53 545.73L391.03 563.67L392.82 542.74L394.32 538.25L395.81 550.21L396.56 541.24L398.80 538.25L401.50 527.79L402.99 557.69L405.08 558.44L408.52 524.79L410.47 563.67L414.95 515.07L417.50 545.73L418.99 559.19L421.23 550.21L423.48 556.20L425.42 539.00L427.50 557.69L427.50 570.50Z" fill="#2a8ca4" stroke="#2ea6c6" stroke-width="1.35" stroke-linejoin="round"/><path d="M361.50 462.50V570.50M384.50 462.50V570.50M406.50 462.50V570.50M339.50 473.50H427.50M339.50 484.50H427.50M339.50 495.50H427.50M339.50 506.50H427.50M339.50 517.50H427.50M339.50 528.50H427.50M339.50 539.50H427.50M339.50 550.50H427.50M339.50 561.50H427.50" fill="none" stroke="#ffffff" stroke-opacity="0.012" stroke-width="1"/><path d="M433.50 462.50H521.50V570.50H433.50ZM455.50 462.50V570.50M478.50 462.50V570.50M500.50 462.50V570.50M433.50 473.50H521.50M433.50 484.50H521.50M433.50 495.50H521.50M433.50 506.50H521.50M433.50 517.50H521.50M433.50 528.50H521.50M433.50 539.50H521.50M433.50 550.50H521.50M433.50 561.50H521.50" fill="none" stroke="#252525" stroke-width="1"/><path d="M433.50 570.50L433.50 540.50L434.49 553.21L436.28 544.23L437.48 551.71L438.97 541.24L440.47 545.73L442.26 536.01L443.76 556.20L445.70 554.70L447.64 556.94L449.44 539.75L451.68 542.74L453.18 557.69L455.12 542.74L457.21 536.01L459.91 551.71L461.70 541.24L464.09 557.69L466.64 527.04L468.13 548.72L469.63 540.50L471.57 548.72L473.66 536.01L475.16 550.21L477.10 537.50L479.35 557.69L481.59 554.70L483.53 545.73L485.63 534.51L487.12 551.71L488.62 545.73L490.56 548.72L492.50 556.20L494.30 533.77L495.79 530.78L497.29 550.21L498.79 545.73L499.98 551.71L502.52 530.03L504.02 554.70L505.96 536.76L508.50 518.81L510.00 530.78L511.79 509.84L512.54 560.68L514.93 527.79L517.48 551.71L519.27 537.50L521.50 554.70L521.50 570.50Z" fill="#2a8ca4" stroke="#2ea6c6" stroke-width="1.35" stroke-linejoin="round"/><path d="M455.50 462.50V570.50M478.50 462.50V570.50M500.50 462.50V570.50M433.50 473.50H521.50M433.50 484.50H521.50M433.50 495.50H521.50M433.50 506.50H521.50M433.50 517.50H521.50M433.50 528.50H521.50M433.50 539.50H521.50M433.50 550.50H521.50M433.50 561.50H521.50" fill="none" stroke="#ffffff" stroke-opacity="0.012" stroke-width="1"/><path d="M527.50 462.50H615.50V570.50H527.50ZM549.50 462.50V570.50M572.50 462.50V570.50M594.50 462.50V570.50M527.50 473.50H615.50M527.50 484.50H615.50M527.50 495.50H615.50M527.50 506.50H615.50M527.50 517.50H615.50M527.50 528.50H615.50M527.50 539.50H615.50M527.50 550.50H615.50M527.50 561.50H615.50" fill="none" stroke="#252525" stroke-width="1"/><path d="M527.50 570.50L527.50 562.18L528.19 566.66L530.28 556.20L533.27 566.66L536.26 547.97L537.76 568.16L540.45 566.66L542.69 565.92L544.93 567.41L547.18 550.21L549.42 568.16L551.66 567.41L553.91 561.43L556.15 563.67L558.69 540.50L561.08 556.20L563.63 565.92L566.62 556.20L568.11 562.18L569.61 554.70L571.85 562.18L574.09 562.18L575.59 556.20L577.08 565.92L579.63 556.20L581.57 565.17L583.81 563.67L586.50 563.67L588.60 559.19L589.79 562.18L592.04 556.94L594.28 563.67L596.52 550.21L598.02 557.69L599.96 548.72L601.76 563.67L603.25 516.57L605.05 563.67L606.99 559.93L609.23 560.68L611.48 563.67L613.72 562.18L615.50 562.93L615.50 570.50Z" fill="#2a8ca4" stroke="#2ea6c6" stroke-width="1.35" stroke-linejoin="round"/><path d="M549.50 462.50V570.50M572.50 462.50V570.50M594.50 462.50V570.50M527.50 473.50H615.50M527.50 484.50H615.50M527.50 495.50H615.50M527.50 506.50H615.50M527.50 517.50H615.50M527.50 528.50H615.50M527.50 539.50H615.50M527.50 550.50H615.50M527.50 561.50H615.50" fill="none" stroke="#ffffff" stroke-opacity="0.012" stroke-width="1"/><path d="M621.50 462.50H710.50V570.50H621.50ZM644.50 462.50V570.50M667.50 462.50V570.50M689.50 462.50V570.50M621.50 473.50H710.50M621.50 484.50H710.50M621.50 495.50H710.50M621.50 506.50H710.50M621.50 517.50H710.50M621.50 528.50H710.50M621.50 539.50H710.50M621.50 550.50H710.50M621.50 561.50H710.50" fill="none" stroke="#252525" stroke-width="1"/><path d="M621.50 570.50L621.50 566.66L623.98 560.68L626.22 559.19L628.47 563.67L630.26 541.99L631.76 568.16L634.75 555.45L635.94 566.66L637.74 556.20L639.23 566.66L641.18 552.46L643.12 568.16L646.41 565.92L648.65 557.69L650.15 556.94L651.20 565.17L653.14 554.70L654.19 563.67L656.58 556.20L658.07 562.18L660.17 550.96L662.86 552.46L665.10 566.66L668.09 561.43L671.53 565.92L674.52 556.94L676.02 566.66L678.56 560.68L680.80 560.68L683.05 559.19L684.99 557.69L686.79 563.67L689.03 563.67L690.97 553.21L693.51 557.69L696.95 541.24L699.50 560.68L703.23 562.18L705.03 554.70L706.97 566.66L710.26 559.19L710.50 559.19L710.50 570.50Z" fill="#2a8ca4" stroke="#2ea6c6" stroke-width="1.35" stroke-linejoin="round"/><path d="M644.50 462.50V570.50M667.50 462.50V570.50M689.50 462.50V570.50M621.50 473.50H710.50M621.50 484.50H710.50M621.50 495.50H710.50M621.50 506.50H710.50M621.50 517.50H710.50M621.50 528.50H710.50M621.50 539.50H710.50M621.50 550.50H710.50M621.50 561.50H710.50" fill="none" stroke="#ffffff" stroke-opacity="0.012" stroke-width="1"/><path d="M715.50 462.50H804.50V570.50H715.50ZM738.50 462.50V570.50M761.50 462.50V570.50M783.50 462.50V570.50M715.50 473.50H804.50M715.50 484.50H804.50M715.50 495.50H804.50M715.50 506.50H804.50M715.50 517.50H804.50M715.50 528.50H804.50M715.50 539.50H804.50M715.50 550.50H804.50M715.50 561.50H804.50" fill="none" stroke="#252525" stroke-width="1"/><path d="M715.50 570.50L715.50 515.07L717.23 529.28L719.18 521.80L721.27 550.21L722.77 538.25L724.71 541.24L726.21 517.32L727.70 523.30L729.20 553.21L731.14 524.79L732.93 522.55L735.63 520.31L737.42 519.56L738.62 553.21L740.41 533.77L741.91 528.53L743.40 547.22L745.64 514.33L747.59 553.21L749.08 526.29L750.88 525.54L752.67 527.79L755.07 512.83L756.86 536.76L758.36 530.78L759.55 548.72L761.05 520.31L762.84 535.26L764.64 536.01L767.03 520.31L768.82 536.76L770.32 542.74L771.81 532.27L773.31 545.73L774.80 540.50L776.60 523.30L777.79 524.05L778.99 562.18L780.79 536.76L782.28 539.75L784.52 515.07L786.77 517.32L788.56 535.26L791.55 477.69L793.50 533.77L794.54 535.26L795.74 524.05L797.23 536.76L799.03 523.30L801.42 547.22L804.26 532.27L804.50 532.27L804.50 570.50Z" fill="#2a8ca4" stroke="#2ea6c6" stroke-width="1.35" stroke-linejoin="round"/><path d="M738.50 462.50V570.50M761.50 462.50V570.50M783.50 462.50V570.50M715.50 473.50H804.50M715.50 484.50H804.50M715.50 495.50H804.50M715.50 506.50H804.50M715.50 517.50H804.50M715.50 528.50H804.50M715.50 539.50H804.50M715.50 550.50H804.50M715.50 561.50H804.50" fill="none" stroke="#ffffff" stroke-opacity="0.012" stroke-width="1"/><path d="M810.00 462.50H898.50V570.50H810.00ZM832.50 462.50V570.50M855.50 462.50V570.50M877.50 462.50V570.50M810.00 473.50H898.50M810.00 484.50H898.50M810.00 495.50H898.50M810.00 506.50H898.50M810.00 517.50H898.50M810.00 528.50H898.50M810.00 539.50H898.50M810.00 550.50H898.50M810.00 561.50H898.50" fill="none" stroke="#252525" stroke-width="1"/><path d="M810.00 570.50L810.00 521.80L811.23 499.37L813.48 523.30L815.72 551.71L816.77 516.57L818.71 526.29L820.21 519.56L822.75 542.74L826.64 518.81L828.13 527.79L829.63 515.07L831.42 518.07L832.62 545.73L834.11 518.81L836.65 550.21L838.90 529.28L840.39 527.79L841.89 544.23L844.58 515.82L846.37 542.74L847.57 508.35L849.66 515.82L852.65 535.26L854.60 522.55L856.54 523.30L858.34 518.07L860.58 523.30L862.82 528.53L864.62 527.79L865.81 522.55L867.31 530.78L868.80 529.28L872.09 505.36L872.99 556.20L874.79 512.83L875.98 527.79L877.48 512.83L879.27 518.81L882.56 542.74L885.55 490.40L886.75 542.74L888.24 504.61L889.74 542.74L891.53 515.82L893.03 523.30L894.52 515.82L895.72 536.76L897.51 527.04L898.26 533.77L898.50 533.77L898.50 570.50Z" fill="#2a8ca4" stroke="#2ea6c6" stroke-width="1.35" stroke-linejoin="round"/><path d="M832.50 462.50V570.50M855.50 462.50V570.50M877.50 462.50V570.50M810.00 473.50H898.50M810.00 484.50H898.50M810.00 495.50H898.50M810.00 506.50H898.50M810.00 517.50H898.50M810.00 528.50H898.50M810.00 539.50H898.50M810.00 550.50H898.50M810.00 561.50H898.50" fill="none" stroke="#ffffff" stroke-opacity="0.012" stroke-width="1"/><path d="M904.00 462.50H992.50V570.50H904.00ZM926.50 462.50V570.50M949.50 462.50V570.50M971.50 462.50V570.50M904.00 473.50H992.50M904.00 484.50H992.50M904.00 495.50H992.50M904.00 506.50H992.50M904.00 517.50H992.50M904.00 528.50H992.50M904.00 539.50H992.50M904.00 550.50H992.50M904.00 561.50H992.50" fill="none" stroke="#252525" stroke-width="1"/><path d="M904.00 570.50L904.00 535.26L905.23 541.24L907.78 538.25L909.27 551.71L910.77 527.79L913.16 536.76L914.21 554.70L915.70 542.74L917.64 544.23L919.14 539.00L920.64 548.72L923.63 518.81L926.17 548.72L927.21 542.74L929.61 520.31L931.10 560.68L932.90 533.77L935.14 538.25L936.64 539.75L938.58 515.07L940.67 551.71L941.87 530.78L944.11 542.74L946.36 526.29L947.85 538.25L949.35 530.78L952.34 553.21L955.03 544.98L956.82 530.78L958.32 495.64L960.56 532.27L961.61 533.02L963.55 506.85L964.60 502.36L966.99 560.68L969.08 520.31L971.03 536.76L973.27 539.75L974.77 532.27L978.06 545.73L979.55 497.13L981.50 535.26L983.74 544.23L985.53 536.76L987.03 553.21L989.72 522.55L992.26 539.75L992.50 539.75L992.50 570.50Z" fill="#2a8ca4" stroke="#2ea6c6" stroke-width="1.35" stroke-linejoin="round"/><path d="M926.50 462.50V570.50M949.50 462.50V570.50M971.50 462.50V570.50M904.00 473.50H992.50M904.00 484.50H992.50M904.00 495.50H992.50M904.00 506.50H992.50M904.00 517.50H992.50M904.00 528.50H992.50M904.00 539.50H992.50M904.00 550.50H992.50M904.00 561.50H992.50" fill="none" stroke="#ffffff" stroke-opacity="0.012" stroke-width="1"/><path d="M998.00 462.50H1086.50V570.50H998.00ZM1020.50 462.50V570.50M1043.50 462.50V570.50M1065.50 462.50V570.50M998.00 473.50H1086.50M998.00 484.50H1086.50M998.00 495.50H1086.50M998.00 506.50H1086.50M998.00 517.50H1086.50M998.00 528.50H1086.50M998.00 539.50H1086.50M998.00 550.50H1086.50M998.00 561.50H1086.50" fill="none" stroke="#252525" stroke-width="1"/><path d="M998.00 570.50L998.00 539.75L999.23 533.02L1001.18 547.22L1003.27 538.25L1004.77 505.36L1006.71 527.79L1008.21 544.23L1010.15 545.73L1011.64 548.72L1013.14 505.36L1014.64 530.78L1016.13 521.80L1018.22 523.30L1020.62 544.23L1022.71 533.77L1024.65 542.74L1026.15 527.79L1028.69 521.80L1029.89 548.72L1031.08 524.05L1033.18 529.28L1035.12 532.27L1037.07 524.05L1039.16 529.28L1040.65 539.75L1042.60 536.76L1045.14 530.78L1046.64 544.23L1049.63 511.34L1051.12 535.26L1052.62 497.88L1054.11 550.21L1055.31 525.54L1056.80 542.74L1059.05 491.90L1061.29 548.72L1063.08 519.56L1065.03 538.25L1066.52 517.32L1068.02 538.25L1069.96 545.73L1071.76 530.78L1073.55 521.80L1075.50 521.80L1077.44 515.07L1078.93 536.76L1080.43 505.36L1082.22 526.29L1083.72 526.29L1085.96 542.74L1086.26 545.73L1086.50 545.73L1086.50 570.50Z" fill="#2a8ca4" stroke="#2ea6c6" stroke-width="1.35" stroke-linejoin="round"/><path d="M1020.50 462.50V570.50M1043.50 462.50V570.50M1065.50 462.50V570.50M998.00 473.50H1086.50M998.00 484.50H1086.50M998.00 495.50H1086.50M998.00 506.50H1086.50M998.00 517.50H1086.50M998.00 528.50H1086.50M998.00 539.50H1086.50M998.00 550.50H1086.50M998.00 561.50H1086.50" fill="none" stroke="#ffffff" stroke-opacity="0.012" stroke-width="1"/></svg>
<div class="t" style="top:17px;font-size:14.5px;line-height:14.5px;color:#ffffff;font-weight:400;-webkit-text-stroke:0.4px #fff;left:9.70px;transform:scaleX(0.9897);transform-origin:0 0;">Производительность</div><div class="t" style="top:19px;font-size:12.5px;line-height:12.5px;color:#e6e6e6;font-weight:400;left:912.00px;transform:scaleX(0.9631);transform-origin:0 0;">Запустить новую задачу</div><div class="t" style="top:64px;font-size:16px;line-height:16px;color:#ffffff;font-weight:400;left:77.60px;transform:scaleX(0.9339);transform-origin:0 0;">ЦП</div><div class="t" style="top:84px;font-size:12px;line-height:12px;color:#c9c9c9;font-weight:400;left:77.60px;transform:scaleX(0.9450);transform-origin:0 0;">76%&nbsp; 4,26 ГГц</div><div class="t" style="top:125px;font-size:16px;line-height:16px;color:#ffffff;font-weight:400;left:77.60px;transform:scaleX(0.9348);transform-origin:0 0;">Память</div><div class="t" style="top:145px;font-size:12px;line-height:12px;color:#c9c9c9;font-weight:400;left:77.60px;transform:scaleX(0.9582);transform-origin:0 0;">25,4/63,7 ГБ (40%)</div><div class="t" style="top:186px;font-size:16px;line-height:16px;color:#ffffff;font-weight:400;left:76.70px;transform:scaleX(0.9859);transform-origin:0 0;">Диск 0 (D:)</div><div class="t" style="top:206px;font-size:12px;line-height:12px;color:#c9c9c9;font-weight:400;left:77.90px;transform:scaleX(0.8790);transform-origin:0 0;">SSD</div><div class="t" style="top:222px;font-size:12px;line-height:12px;color:#c9c9c9;font-weight:400;left:77.90px;">0%</div><div class="t" style="top:256px;font-size:16px;line-height:16px;color:#ffffff;font-weight:400;left:76.70px;transform:scaleX(0.9682);transform-origin:0 0;">Диск 1 (C:)</div><div class="t" style="top:276px;font-size:12px;line-height:12px;color:#c9c9c9;font-weight:400;left:77.90px;transform:scaleX(0.8790);transform-origin:0 0;">SSD</div><div class="t" style="top:292px;font-size:12px;line-height:12px;color:#c9c9c9;font-weight:400;left:77.90px;">0%</div><div class="t" style="top:326px;font-size:16px;line-height:16px;color:#ffffff;font-weight:400;left:76.70px;transform:scaleX(0.9836);transform-origin:0 0;">Wi-Fi</div><div class="t" style="top:346px;font-size:12px;line-height:12px;color:#c9c9c9;font-weight:400;left:78.10px;transform:scaleX(0.9720);transform-origin:0 0;">Беспроводная сеть</div><div class="t" style="top:362px;font-size:12px;line-height:12px;color:#c9c9c9;font-weight:400;left:78.10px;transform:scaleX(1.0360);transform-origin:0 0;">О: 0 П: 0 кбит/с</div><div class="t" style="top:396px;font-size:16px;line-height:16px;color:#ffffff;font-weight:400;left:77.50px;transform:scaleX(0.9954);transform-origin:0 0;">Графический процессор 0</div><div class="t" style="top:416px;font-size:12px;line-height:12px;color:#c9c9c9;font-weight:400;left:78.10px;transform:scaleX(0.9491);transform-origin:0 0;">NVIDIA GeForce RTX 4060 Laptop GPU</div><div class="t" style="top:432px;font-size:12px;line-height:12px;color:#c9c9c9;font-weight:400;left:78.10px;transform:scaleX(0.9725);transform-origin:0 0;">51% (57 °C)</div><div class="t" style="top:64px;font-size:30px;line-height:30px;color:#ffffff;font-weight:400;left:335.60px;transform:scaleX(0.9505);transform-origin:0 0;">ЦП</div><div class="t" style="top:76px;font-size:16.4px;line-height:16.4px;color:#ffffff;font-weight:400;left:754.30px;transform:scaleX(0.9501);transform-origin:100% 0;">AMD Ryzen 9 7945HX with Radeon Graphics</div><div class="t" style="top:105px;font-size:11.2px;line-height:11.2px;color:#c9c9c9;font-weight:400;left:338.50px;transform:scaleX(0.9146);transform-origin:0 0;">% использования более 60 секунд</div><div class="t" style="top:105px;font-size:11.2px;line-height:11.2px;color:#c9c9c9;font-weight:400;left:1059.38px;transform:scaleX(0.8908);transform-origin:100% 0;">100%</div><div class="t" style="top:601px;font-size:12px;line-height:12px;color:#c9c9c9;font-weight:400;left:337.00px;transform:scaleX(0.9773);transform-origin:0 0;">Использование</div><div class="t" style="top:601px;font-size:12px;line-height:12px;color:#c9c9c9;font-weight:400;left:441.30px;transform:scaleX(0.9879);transform-origin:0 0;">Скорость</div><div class="t" style="top:620px;font-size:22.5px;line-height:22.5px;color:#ffffff;font-weight:400;left:337.00px;transform:scaleX(0.8791);transform-origin:0 0;">76%</div><div class="t" style="top:620px;font-size:22.5px;line-height:22.5px;color:#ffffff;font-weight:400;left:441.30px;transform:scaleX(0.8785);transform-origin:0 0;">4,26 ГГц</div><div class="t" style="top:656px;font-size:12px;line-height:12px;color:#c9c9c9;font-weight:400;left:337.00px;transform:scaleX(0.9890);transform-origin:0 0;">Процессы</div><div class="t" style="top:656px;font-size:12px;line-height:12px;color:#c9c9c9;font-weight:400;left:413.10px;transform:scaleX(1.0197);transform-origin:0 0;">Потоки</div><div class="t" style="top:656px;font-size:12px;line-height:12px;color:#c9c9c9;font-weight:400;left:478.30px;transform:scaleX(0.9923);transform-origin:0 0;">Дескрипторы</div><div class="t" style="top:675px;font-size:22.5px;line-height:22.5px;color:#ffffff;font-weight:400;left:337.00px;transform:scaleX(0.8789);transform-origin:0 0;">304</div><div class="t" style="top:675px;font-size:22.5px;line-height:22.5px;color:#ffffff;font-weight:400;left:413.10px;transform:scaleX(0.8749);transform-origin:0 0;">7035</div><div class="t" style="top:675px;font-size:22.5px;line-height:22.5px;color:#ffffff;font-weight:400;left:478.30px;transform:scaleX(0.8922);transform-origin:0 0;">247675</div><div class="t" style="top:711px;font-size:12px;line-height:12px;color:#c9c9c9;font-weight:400;left:337.00px;transform:scaleX(0.9727);transform-origin:0 0;">Время работы</div><div class="t" style="top:730px;font-size:22.5px;line-height:22.5px;color:#ffffff;font-weight:400;left:337.00px;transform:scaleX(0.8715);transform-origin:0 0;">20:23:29:19</div><div class="t" style="top:601px;font-size:12px;line-height:12px;color:#c9c9c9;font-weight:400;left:564.40px;transform:scaleX(0.9724);transform-origin:0 0;">Базовая скорость:</div><div class="t" style="top:601px;font-size:12px;line-height:12px;color:#ffffff;font-weight:400;left:721.10px;transform:scaleX(0.9342);transform-origin:0 0;">2,50 ГГц</div><div class="t" style="top:621px;font-size:12px;line-height:12px;color:#c9c9c9;font-weight:400;left:564.40px;transform:scaleX(0.9846);transform-origin:0 0;">Сокетов:</div><div class="t" style="top:621px;font-size:12px;line-height:12px;color:#ffffff;font-weight:400;left:721.10px;">1</div><div class="t" style="top:641px;font-size:12px;line-height:12px;color:#c9c9c9;font-weight:400;left:564.40px;transform:scaleX(0.9055);transform-origin:0 0;">Ядра:</div><div class="t" style="top:641px;font-size:12px;line-height:12px;color:#ffffff;font-weight:400;left:721.10px;">16</div><div class="t" style="top:661px;font-size:12px;line-height:12px;color:#c9c9c9;font-weight:400;left:564.40px;transform:scaleX(1.0073);transform-origin:0 0;">Логических процессоров:</div><div class="t" style="top:661px;font-size:12px;line-height:12px;color:#ffffff;font-weight:400;left:721.10px;">32</div><div class="t" style="top:681px;font-size:12px;line-height:12px;color:#c9c9c9;font-weight:400;left:564.40px;transform:scaleX(0.9404);transform-origin:0 0;">Виртуализация:</div><div class="t" style="top:681px;font-size:12px;line-height:12px;color:#ffffff;font-weight:400;left:721.10px;transform:scaleX(0.9881);transform-origin:0 0;">Включено</div><div class="t" style="top:701px;font-size:12px;line-height:12px;color:#c9c9c9;font-weight:400;left:564.40px;transform:scaleX(0.9119);transform-origin:0 0;">Кэш L1:</div><div class="t" style="top:701px;font-size:12px;line-height:12px;color:#ffffff;font-weight:400;left:721.10px;transform:scaleX(0.9501);transform-origin:0 0;">1,0 МБ</div><div class="t" style="top:721px;font-size:12px;line-height:12px;color:#c9c9c9;font-weight:400;left:564.40px;transform:scaleX(0.9119);transform-origin:0 0;">Кэш L2:</div><div class="t" style="top:721px;font-size:12px;line-height:12px;color:#ffffff;font-weight:400;left:721.10px;transform:scaleX(0.9560);transform-origin:0 0;">16,0 МБ</div><div class="t" style="top:741px;font-size:12px;line-height:12px;color:#c9c9c9;font-weight:400;left:564.40px;transform:scaleX(0.9119);transform-origin:0 0;">Кэш L3:</div><div class="t" style="top:741px;font-size:12px;line-height:12px;color:#ffffff;font-weight:400;left:721.10px;transform:scaleX(0.9560);transform-origin:0 0;">64,0 МБ</div>
</body></html>
